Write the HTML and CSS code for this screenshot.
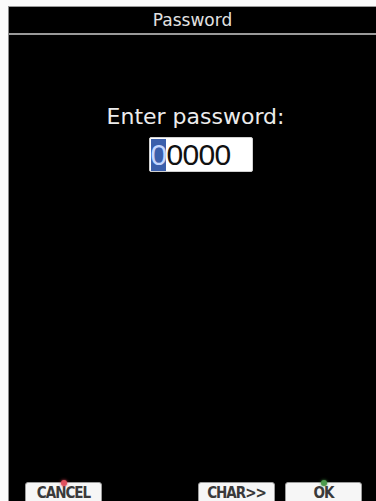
FILE: index.html
```html
<!DOCTYPE html>
<html>
<head>
<meta charset="utf-8">
<link rel="stylesheet" href="styles.css">
</head>
<body>
<div class="screen">
  <div class="titlebar">Password</div>
  <div class="sep"></div>
  <div class="content">
    <div class="prompt">Enter password:</div>
    <div class="field"><span class="digit cur">0</span><span class="digit">0</span><span class="digit">0</span><span class="digit">0</span><span class="digit">0</span></div>
  </div>
  <div class="footer">
    <div class="btn"><span class="led red"></span><span class="lbl">CANCEL</span></div>
    <div class="group">
      <div class="btn"><span class="lbl">CHAR&gt;&gt;</span></div>
      <div class="btn"><span class="led green"></span><span class="lbl">OK</span></div>
    </div>
  </div>
</div>
</body>
</html>
```
FILE: styles.css
```css
html, body {
  margin: 0;
  padding: 0;
  background: #fbfbfb;
}
body {
  width: 376px;
  height: 501px;
  overflow: hidden;
}
.screen {
  margin: 6px 0 0 8px;
  height: 495px;
  background: #000;
  border-top: 1px solid #9a9a9a;
  border-left: 1px solid #8a8a8a;
  display: flex;
  flex-direction: column;
  overflow: hidden;
  box-sizing: border-box;
}
.titlebar {
  height: 26px;
  line-height: 26px;
  text-align: center;
  font-family: "DejaVu Sans", sans-serif;
  font-size: 17px;
  color: #e2e2e2;
}
.sep {
  height: 2px;
  background: #9a9a9a;
}
.content {
  display: flex;
  flex-direction: column;
  align-items: center;
  padding-top: 69px;
  flex: 1;
}
.prompt {
  font-family: "DejaVu Sans", sans-serif;
  font-size: 22px;
  line-height: 26px;
  color: #ececec;
  padding-left: 6px;
}
.field {
  margin-top: 7px;
  margin-left: 16px;
  width: 104px;
  height: 35px;
  box-sizing: border-box;
  background: #fff;
  border: 1px solid #d0d0d0;
  border-radius: 2px;
  padding: 1px 0 0 1px;
  display: flex;
  font-family: "Liberation Sans", Arial, sans-serif;
  font-size: 30px;
  line-height: 32px;
  color: #111;
}
.digit {
  display: block;
  width: 16px;
  text-align: center;
}
.digit.cur {
  background: #3b5fab;
  color: #c4d6ff;
  width: 15px;
  margin-right: 1px;
}
.footer {
  height: 19px;
  display: flex;
  justify-content: space-between;
  align-items: flex-start;
  padding: 0 14px 0 16px;
}
.group {
  display: flex;
  gap: 10px;
}
.btn {
  position: relative;
  width: 77px;
  height: 26px;
  box-sizing: border-box;
  background: #f6f6f6;
  border: 1px solid #9c9c9c;
  border-radius: 3px;
  text-align: center;
  padding-top: 4px;
}
.lbl {
  display: block;
  font-family: "DejaVu Sans Condensed", "DejaVu Sans", sans-serif;
  font-weight: bold;
  font-size: 15px;
  letter-spacing: -1px;
  line-height: 13px;
  color: #3a3a3a;
}
.led {
  position: absolute;
  top: -3px;
  left: 50%;
  width: 6px;
  height: 6px;
  margin-left: -3px;
  border-radius: 50%;
}
.led.red {
  background: #e0505e;
  box-shadow: 0 0 3px #e04050;
}
.led.green {
  background: #4c9a4c;
  box-shadow: 0 0 3px #3a8a3a;
}
```
